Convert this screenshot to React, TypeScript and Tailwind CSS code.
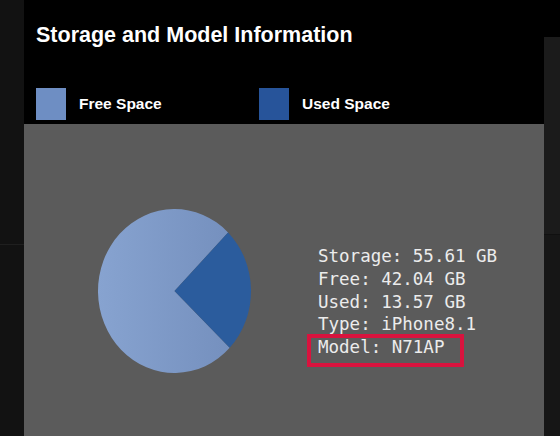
import React from "react";

const info = [
  "Storage: 55.61 GB",
  "Free: 42.04 GB",
  "Used: 13.57 GB",
  "Type: iPhone8.1",
];

function StoragePie() {
  // ellipse because the source capture is slightly stretched vertically
  const rx = 76.5;
  const ry = 82;
  const upper = { x: rx + rx * Math.cos(-0.795), y: ry + ry * Math.sin(-0.795) };
  const lower = { x: rx + rx * Math.cos(0.765), y: ry + ry * Math.sin(0.765) };
  return (
    <svg width={153} height={164} viewBox="0 0 153 164" className="shrink-0">
      <defs>
        <linearGradient id="freeFill" x1="0" y1="0" x2="1" y2="0">
          <stop offset="0" stopColor="#87a3d0" />
          <stop offset="1" stopColor="#7590be" />
        </linearGradient>
      </defs>
      <path
        d={`M ${rx} ${ry} L ${lower.x} ${lower.y} A ${rx} ${ry} 0 1 1 ${upper.x} ${upper.y} Z`}
        fill="url(#freeFill)"
      />
      <path
        d={`M ${rx} ${ry} L ${upper.x} ${upper.y} A ${rx} ${ry} 0 0 1 ${lower.x} ${lower.y} Z`}
        fill="#2b5c9d"
      />
    </svg>
  );
}

export default function App() {
  return (
    <div className="grid h-[436px] w-[560px] grid-cols-[24px_520px_16px] overflow-hidden bg-[#131313] font-['Liberation_Sans',Arial,sans-serif]">
      <div className="flex flex-col bg-[#121212]">
        <div className="h-[245px] border-b border-[#1f1f1f]" />
      </div>

      <main className="flex flex-col">
        <header className="flex h-[124px] flex-col bg-black px-3 pt-[22px]">
          <h1 className="text-[21.5px] font-bold leading-[26px] text-white">Storage and Model Information</h1>
          <div className="mt-[40px] flex items-center">
            <div className="flex w-[223px] items-center gap-[13px]">
              <span className="h-8 w-[30px] bg-[#6e8ec3]" />
              <span className="text-[15.5px] font-bold text-white">Free Space</span>
            </div>
            <div className="flex items-center gap-[13px]">
              <span className="h-8 w-[30px] bg-[#27549a]" />
              <span className="text-[15.5px] font-bold text-white">Used Space</span>
            </div>
          </div>
        </header>

        <section className="flex flex-1 items-start bg-[#5b5b5b] pl-[74px] pt-[85px]">
          <StoragePie />
          <div className="ml-[67px] mt-9 font-['DejaVu_Sans_Mono',monospace] text-[17.5px] leading-[22.8px] text-[#ececec]">
            {info.map((line) => (
              <div key={line} className="whitespace-pre">{line}</div>
            ))}
            <div className="relative whitespace-pre">
              Model: N71AP
              <div className="absolute left-[-11px] top-[-2px] h-[33px] w-[157px] border-4 border-[#d8133e]" />
            </div>
          </div>
        </section>
      </main>

      <div className="flex flex-col">
        <div className="h-[37px] bg-black" />
        <div className="h-[198px] border-b border-[#101010] bg-[#1b1b1b]" />
        <div className="flex-1 bg-[#161616]" />
      </div>
    </div>
  );
}
